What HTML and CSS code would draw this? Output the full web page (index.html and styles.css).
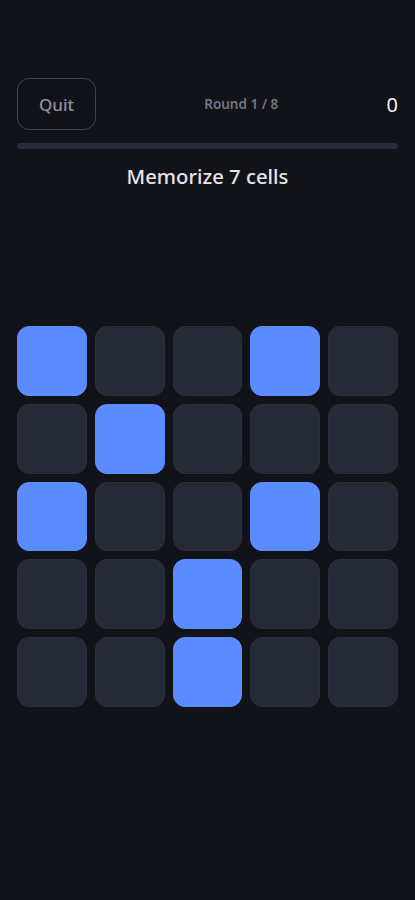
FILE: index.html
```html
<!DOCTYPE html>
<html lang="en">
<head>
<meta charset="utf-8">
<meta name="viewport" content="width=device-width, initial-scale=1">
<title>Memory Grid</title>
<link rel="stylesheet" href="styles.css">
</head>
<body>
<div class="app">
  <div class="header">
    <button class="quit">Quit</button>
    <div class="round">Round 1 / 8</div>
    <div class="score">0</div>
  </div>
  <div class="progress"></div>
  <div class="title">Memorize 7 cells</div>
  <div class="grid">
    <div class="cell on"></div><div class="cell"></div><div class="cell"></div><div class="cell on"></div><div class="cell"></div>
    <div class="cell"></div><div class="cell on"></div><div class="cell"></div><div class="cell"></div><div class="cell"></div>
    <div class="cell on"></div><div class="cell"></div><div class="cell"></div><div class="cell on"></div><div class="cell"></div>
    <div class="cell"></div><div class="cell"></div><div class="cell on"></div><div class="cell"></div><div class="cell"></div>
    <div class="cell"></div><div class="cell"></div><div class="cell on"></div><div class="cell"></div><div class="cell"></div>
  </div>
</div>
</body>
</html>
```

FILE: styles.css
```css
* { box-sizing: border-box; }
html, body {
  margin: 0;
  background: #121318;
  height: 100%;
}
body {
  font-family: "Noto Sans", "Open Sans", sans-serif;
  color: #e6e7ea;
}
.app {
  padding: 78px 17px 0;
}
.header {
  display: flex;
  justify-content: space-between;
  align-items: center;
  height: 52px;
}
.quit {
  width: 79px;
  height: 52px;
  border: 1.5px solid #424652;
  border-radius: 12px;
  background: transparent;
  color: #8d929e;
  font-family: inherit;
  font-size: 17px;
  font-weight: 500;
  padding: 0;
}
.round {
  font-size: 13.5px;
  font-weight: 600;
  color: #727783;
}
.score {
  font-size: 20px;
  color: #f2f2f4;
}
.progress {
  margin-top: 13px;
  height: 6px;
  border-radius: 3px;
  background: #262c3a;
}
.title {
  margin-top: 13px;
  text-align: center;
  font-size: 20.3px;
  line-height: 28px;
  font-weight: 500;
  color: #e4e5e8;
}
.grid {
  margin-top: 136px;
  display: grid;
  grid-template-columns: repeat(5, 1fr);
  gap: 8px;
}
.cell {
  aspect-ratio: 1 / 1;
  border-radius: 12px;
  background: #252a36;
  border: 1px solid #2a2f3b;
}
.cell.on {
  background: #5b8cff;
  border-color: #5b8cff;
}
```
